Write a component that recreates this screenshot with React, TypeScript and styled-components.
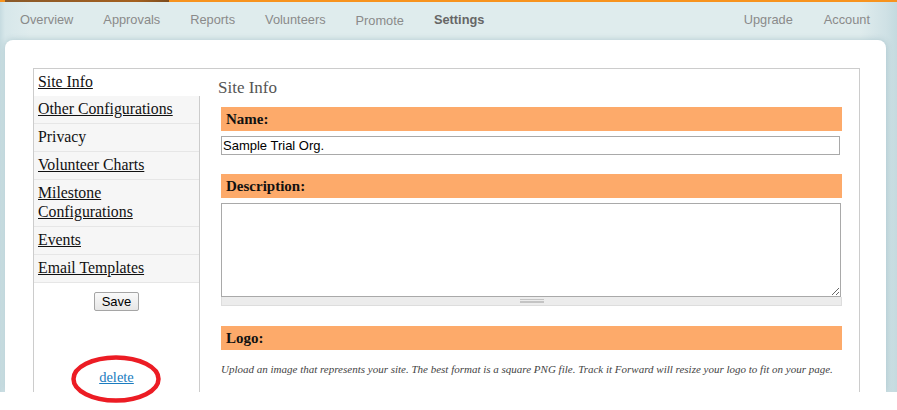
import React from "react";
import styled, { createGlobalStyle } from "styled-components";

const GlobalStyle = createGlobalStyle`
  html, body {
    margin: 0;
    padding: 0;
    background: #ffffff;
  }
`;

const navLeft = ["Overview", "Approvals", "Reports", "Volunteers", "Promote", "Settings"];
const navRight = ["Upgrade", "Account"];

const sideLinks = [
  { label: "Site Info", link: true, active: true },
  { label: "Other Configurations", link: true },
  { label: "Privacy", link: false },
  { label: "Volunteer Charts", link: true },
  { label: "Milestone Configurations", link: true },
  { label: "Events", link: true },
  { label: "Email Templates", link: true },
];

const App: React.FC = () => {
  return (
    <Wrapper>
      <GlobalStyle />
      <Page>
        <TopLine>
          <TopLineAccent />
        </TopLine>
        <NavBar>
          <NavGroup gap={30}>
            {navLeft.map((item) => (
              <NavItem key={item} active={item === "Settings"} lowered={item === "Promote"}>
                {item}
              </NavItem>
            ))}
          </NavGroup>
          <NavGroup gap={31}>
            {navRight.map((item) => (
              <NavItem key={item}>{item}</NavItem>
            ))}
          </NavGroup>
        </NavBar>

        <Card>
          <SettingsBox>
            <Sidebar>
              <SideList>
                {sideLinks.map((s) => (
                  <SideItem key={s.label} active={!!s.active}>
                    {s.link ? <SideLink href="#">{s.label}</SideLink> : s.label}
                  </SideItem>
                ))}
              </SideList>
              <SaveRow>
                <SaveButton>Save</SaveButton>
              </SaveRow>
              <DeleteRow>
                <DeleteLink href="#">delete</DeleteLink>
              </DeleteRow>
            </Sidebar>

            <Content>
              <Heading>Site Info</Heading>
              <FieldBar>Name:</FieldBar>
              <TextInput defaultValue="Sample Trial Org." />

              <FieldBar spacing={19}>Description:</FieldBar>
              <AreaWrap>
                <TextArea />
                <ResizeStrip>
                  <Grip />
                </ResizeStrip>
              </AreaWrap>

              <FieldBar spacing={20}>Logo:</FieldBar>
              <Hint>
                Upload an image that represents your site. The best format is a square PNG file. Track it
                Forward will resize your logo to fit on your page.
              </Hint>
            </Content>
          </SettingsBox>
        </Card>
      </Page>

      {/* red annotation circle drawn over the screenshot */}
      <Annotation width="92" height="50" viewBox="0 0 92 50">
        <ellipse cx="46" cy="25" rx="42.5" ry="21.5" fill="none" stroke="#ec1c24" strokeWidth="4.5" />
      </Annotation>
    </Wrapper>
  );
};

const Wrapper = styled.div`
  position: relative;
  width: 897px;
  height: 410px;
  background: #ffffff;
  overflow: hidden;
`;

const Page = styled.div`
  height: 392px;
  overflow: hidden;
  background: linear-gradient(to right, #c6dbe0 0px, #d7e7ea 5px, #dfeced 30px, #dfeced 860px, #cfe1e5 886px, #c4dadf 897px);
  display: flex;
  flex-direction: column;
`;

const TopLine = styled.div`
  height: 2px;
  background: #f7931e;
  padding-left: 5px;
`;

const TopLineAccent = styled.div`
  width: 164px;
  height: 2px;
  background: linear-gradient(to right, #8a5a2a, #a4601f 80%, #7b4c20);
`;

const NavBar = styled.div`
  height: 38px;
  display: flex;
  justify-content: space-between;
  align-items: center;
  padding: 0 27px 0 20px;
  font-family: "Liberation Sans", Arial, sans-serif;
  font-size: 12.8px;
`;

const NavGroup = styled.div<{ gap: number }>`
  display: flex;
  gap: ${(p) => p.gap}px;
  align-items: center;
`;

const NavItem = styled.span<{ active?: boolean; lowered?: boolean }>`
  color: ${(p) => (p.active ? "#666666" : "#8a8a8a")};
  font-weight: ${(p) => (p.active ? "bold" : "normal")};
  position: relative;
  top: ${(p) => (p.lowered ? "-1px" : "-2px")};
`;

const Card = styled.div`
  flex: 1;
  margin: 0 11px 0 5px;
  background: #ffffff;
  border-radius: 8px 8px 0 0;
  box-shadow: 0 0 6px rgba(120, 160, 172, 0.45);
  padding: 28px 28px 0 28px;
  display: flex;
`;

const SettingsBox = styled.div`
  flex: 1;
  border: 1px solid #cccccc;
  border-bottom: none;
  display: flex;
`;

const Sidebar = styled.div`
  width: 165px;
  border-right: 1px solid #cccccc;
  display: flex;
  flex-direction: column;
  font-family: Georgia, "Liberation Serif", serif;
`;

const SideList = styled.div`
  display: flex;
  flex-direction: column;
`;

const SideItem = styled.div<{ active: boolean }>`
  background: ${(p) => (p.active ? "#ffffff" : "#f6f6f6")};
  border-bottom: ${(p) => (p.active ? "none" : "1px solid #e6e6e6")};
  margin-right: ${(p) => (p.active ? "-1px" : "0")};
  padding: 3px 5px 5px 4px;
  line-height: 19px;
  font-size: 15.8px;
  color: #111111;
`;

const SideLink = styled.a`
  color: #111111;
  text-decoration: underline;
`;

const SaveRow = styled.div`
  display: flex;
  justify-content: center;
  padding-top: 9px;
`;

const SaveButton = styled.button`
  font-family: "Liberation Sans", Arial, sans-serif;
  font-size: 13px;
  height: 19px;
  padding: 0 7px;
  border: 1px solid #a5a5a5;
  border-radius: 2px;
  background: linear-gradient(#fafafa, #e6e6e6);
  color: #000000;
`;

const DeleteRow = styled.div`
  display: flex;
  justify-content: center;
  padding-top: 58px;
`;

const DeleteLink = styled.a`
  font-size: 14.5px;
  color: #1a7cc0;
  text-decoration: underline;
`;

const Content = styled.div`
  flex: 1;
  padding: 8px 17px 0 21px;
  display: flex;
  flex-direction: column;
  font-family: Georgia, "Liberation Serif", serif;
`;

const Heading = styled.div`
  font-size: 17px;
  color: #555555;
  line-height: 22px;
  margin-left: -3px;
  margin-bottom: 8px;
`;

const FieldBar = styled.div<{ spacing?: number }>`
  background: #fdaa6a;
  height: 24px;
  line-height: 24px;
  padding-left: 5px;
  font-weight: bold;
  font-size: 15px;
  color: #111111;
  margin-top: ${(p) => p.spacing ?? 0}px;
  margin-bottom: 5px;
`;

const TextInput = styled.input`
  box-sizing: border-box;
  width: 619px;
  height: 19px;
  border: 1px solid #a9a9a9;
  padding: 0 1px;
  font-family: "Liberation Sans", Arial, sans-serif;
  font-size: 13px;
  color: #000000;
  outline: none;
`;

const AreaWrap = styled.div`
  width: 621px;
  display: flex;
  flex-direction: column;
`;

const TextArea = styled.textarea`
  box-sizing: border-box;
  width: 620px;
  height: 94px;
  border: 1px solid #a9a9a9;
  margin: 0;
  display: block;
`;

const ResizeStrip = styled.div`
  height: 9px;
  background: #ececec;
  border: 1px solid #dddddd;
  border-top: none;
  box-sizing: border-box;
  display: flex;
  justify-content: center;
  align-items: center;
`;

const Grip = styled.div`
  width: 24px;
  height: 4px;
  border-top: 1px solid #c4c4c4;
  border-bottom: 1px solid #c4c4c4;
  box-sizing: border-box;
  position: relative;
  &::after {
    content: "";
    position: absolute;
    left: 0;
    right: 0;
    top: 1px;
    border-top: 1px solid #c4c4c4;
  }
`;

const Hint = styled.div`
  font-style: italic;
  font-size: 11px;
  color: #444444;
  margin-top: 8px;
  line-height: 12px;
  white-space: nowrap;
`;

const Annotation = styled.svg`
  position: absolute;
  left: 70px;
  top: 354px;
`;

export default App;
